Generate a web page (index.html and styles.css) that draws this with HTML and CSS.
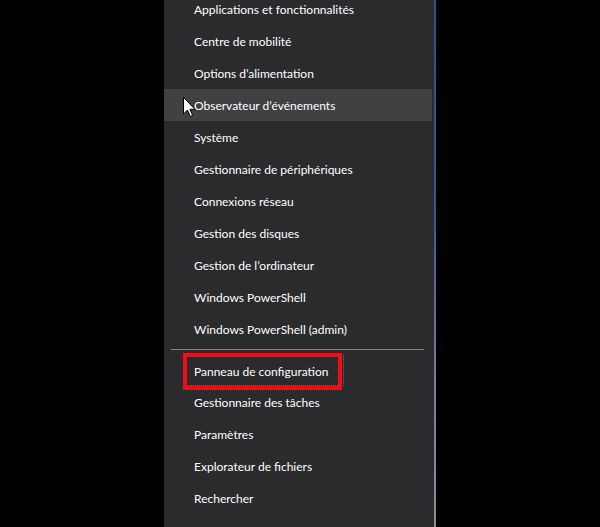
FILE: index.html
```html
<!DOCTYPE html>
<html lang="fr">
<head>
<meta charset="utf-8">
<link rel="stylesheet" href="styles.css">
</head>
<body>
<div class="frame">
  <div class="panel">
    <ul class="menu">
      <li class="item">Applications et fonctionnalités</li>
      <li class="item">Centre de mobilité</li>
      <li class="item">Options d’alimentation</li>
      <li class="item hover">Observateur d’événements</li>
      <li class="item">Système</li>
      <li class="item">Gestionnaire de périphériques</li>
      <li class="item">Connexions réseau</li>
      <li class="item">Gestion des disques</li>
      <li class="item">Gestion de l’ordinateur</li>
      <li class="item">Windows PowerShell</li>
      <li class="item">Windows PowerShell (admin)</li>
      <li class="sep"></li>
      <li class="item focus"><span class="focus-ring">Panneau de configuration</span><span class="highlight"></span></li>
      <li class="item">Gestionnaire des tâches</li>
      <li class="item">Paramètres</li>
      <li class="item">Explorateur de fichiers</li>
      <li class="item">Rechercher</li>
      <li class="item">Exécuter</li>
    </ul>
    <svg class="cursor" width="13" height="21" viewBox="0 0 13 21">
      <path d="M0.5 0.5 L0.5 17 L4.5 13 L7.3 19.5 L9.6 18.5 L6.9 12.3 L12 12.3 Z" fill="#fff" stroke="#000" stroke-width="1"/>
    </svg>
  </div>
  <div class="edge"></div>
</div>
</body>
</html>
```
FILE: styles.css
```css
html, body {
  margin: 0;
  padding: 0;
  background: #000;
  height: 100%;
  overflow: hidden;
}
.frame {
  display: flex;
  height: 527px;
  padding-left: 164px;
}
.panel {
  position: relative;
  width: 270px;
  height: 100%;
  background: #2b2b2d;
  overflow: hidden;
}
.edge {
  width: 2px;
  height: 100%;
  background: linear-gradient(to bottom, #2e4f95 0%, #3a5590 40%, #6f7d95 70%, #8a8f99 100%);
}
.menu {
  list-style: none;
  margin: -7px 0 0 0;
  padding: 0;
  font-family: "Lato", "Noto Sans", sans-serif;
  font-size: 12px;
  color: #ffffff;
}
.item {
  position: relative;
  height: 32px;
  line-height: 34px;
  padding-left: 30px;
  margin-right: 2px;
  white-space: nowrap;
}
.item.hover {
  background: #414143;
}
.sep {
  height: 9px;
  display: flex;
  align-items: center;
  padding: 0 10px 0 7px;
}
.sep::before {
  content: "";
  flex: 1;
  height: 1px;
  background: #858585;
}
.focus-ring {
  position: absolute;
  left: 22px;
  top: 2px;
  width: 157px;
  height: 29px;
  line-height: 31px;
  padding-left: 8px;
  box-sizing: border-box;
  outline: 1px dotted #6a6a6a;
}
.highlight {
  position: absolute;
  left: 19px;
  top: -1px;
  width: 159px;
  height: 37px;
  box-sizing: border-box;
  border: 4px solid #f20d12;
}
.cursor {
  position: absolute;
  left: 19px;
  top: 97px;
}
```
